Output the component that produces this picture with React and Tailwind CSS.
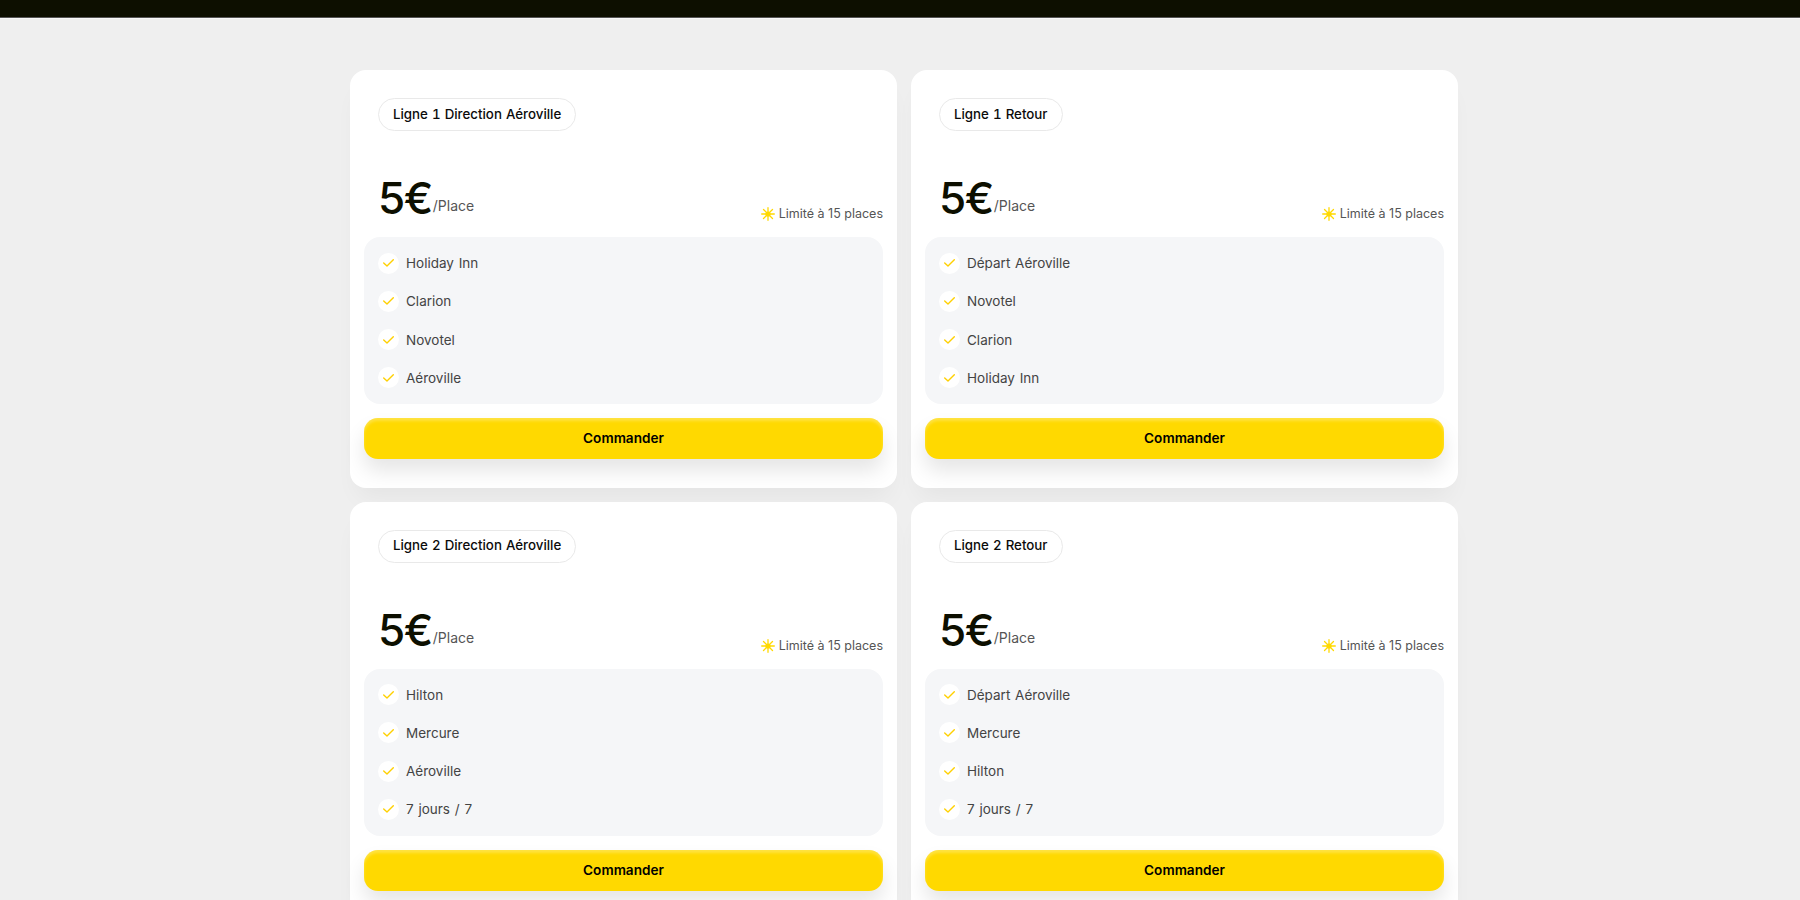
import React from 'react';

const cards = [
    { title: "Ligne 1 Direction Aéroville", stops: ["Holiday Inn", "Clarion", "Novotel", "Aéroville"] },
    { title: "Ligne 1 Retour", stops: ["Départ Aéroville", "Novotel", "Clarion", "Holiday Inn"] },
    { title: "Ligne 2 Direction Aéroville", stops: ["Hilton", "Mercure", "Aéroville", "7 jours / 7"] },
    { title: "Ligne 2 Retour", stops: ["Départ Aéroville", "Mercure", "Hilton", "7 jours / 7"] },
];

const Sun = () => (
    <svg width="14" height="14" viewBox="0 0 14 14" className="shrink-0" fill="none" stroke="#ffd900" strokeWidth="1.3" strokeLinecap="round">
        <circle cx="7" cy="7" r="2.6" fill="#ffd900" stroke="none" />
        <path d="M7 .7v12.6M.7 7h12.6M2.5 2.5l9 9M11.5 2.5l-9 9" />
    </svg>
);

const Check = () => (
    <span className="flex h-[21px] w-[21px] shrink-0 items-center justify-center rounded-full bg-white">
        <svg width="11" height="8" viewBox="0 0 11 8" fill="none" stroke="#ffd000" strokeWidth="1.4" strokeLinecap="round" strokeLinejoin="round">
            <path d="M.7 3.9 4 7 10.3.8" />
        </svg>
    </span>
);

const Card = ({ title, stops }) => (
    <div className="flex h-[417.5px] flex-col rounded-[16px] bg-white p-[14px] shadow-[0_16px_24px_-8px_rgba(0,0,0,0.05)]">
        <div className="px-[14px] pt-[14px]">
            <span className="inline-flex h-[33px] items-center rounded-full border border-[#e9e9e9] px-[14px] text-[13.3px] font-medium tabular-nums text-[#0b0b0b] [word-spacing:0.5px]">{title}</span>
        </div>
        <div className="mt-[41px] flex items-end justify-between pl-[14px]">
            <div className="flex items-end">
                <span className="relative top-[1px] text-[44px] font-medium leading-[50px] tracking-[-1.5px] text-[#0d0f00]">5€</span>
                <span className="mb-[6px] ml-[1px] text-[14px] leading-[20px] text-[#555]">/Place</span>
            </div>
            <div className="-mb-[1px] flex items-center gap-[4px] text-[12.5px] leading-[18px] text-[#555]">
                <Sun />
                Limité à 15 places
            </div>
        </div>
        <ul className="mt-[15px] flex h-[167px] flex-col justify-between rounded-[16px] bg-[#f5f6f8] px-[14px] py-[15px]">
            {stops.map((stop) => (
                <li key={stop} className="flex items-center gap-[7px] text-[13.5px] leading-[22px] text-[#444] [word-spacing:1px]">
                    <Check />
                    {stop}
                </li>
            ))}
        </ul>
        <button className="mt-[14px] h-[41px] w-full rounded-[14px] bg-[#ffd900] text-[13.6px] font-semibold text-black shadow-[inset_0_3px_3px_rgba(255,255,255,0.25),0_12px_20px_rgba(0,0,0,0.1)]">
            Commander
        </button>
    </div>
);

export default function App() {
    return (
        <div className="h-screen overflow-hidden bg-[#efefef] font-['Inter',sans-serif]">
            <div className="h-[18px] border-b border-[#555] bg-[#0d0f00] shadow-[0_1px_0_#f8f8f8]" />
            <div className="ml-[350px] mt-[52px] grid w-[1108px] grid-cols-2 gap-[14px]">
                {cards.map((card) => (
                    <Card key={card.title} {...card} />
                ))}
            </div>
        </div>
    );
}
